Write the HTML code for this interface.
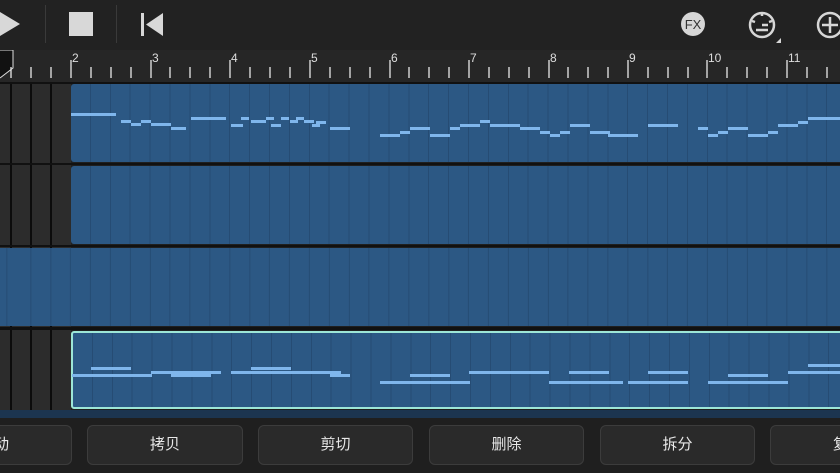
<!DOCTYPE html>
<html><head><meta charset="utf-8"><style>
*{margin:0;padding:0;box-sizing:border-box}
body{width:840px;height:473px;background:#1f1f1f;position:relative;overflow:hidden;font-family:"Liberation Sans","Noto Sans CJK SC",sans-serif}
.a{position:absolute}
.row{position:absolute;left:71px;width:780px;height:78px;background:#2c5884;border-radius:3px;
background-image:repeating-linear-gradient(90deg,transparent 0 18.9px,#264c74 18.9px 19.9px);}
.n{position:absolute;height:3px;background:#7fb6ec}
.btn{position:absolute;top:425px;height:40px;background:#2a2a2a;border:1px solid #3c3c3c;border-radius:6px;color:#e8e8e8;font-size:15px;text-align:center;line-height:38px}
.lbl{position:absolute;top:51px;color:#ddd;font-size:12px}
</style></head><body>
<div class="a" style="left:0;top:0;width:840px;height:50px;background:#222"></div>
<svg class="a" style="left:0;top:0" width="840" height="50">
<polygon points="0,12 20,24 0,36" fill="#d8d8d8"/>
<rect x="45" y="5" width="1" height="38" fill="#3a3a3a"/>
<rect x="69" y="12" width="24" height="24" fill="#d8d8d8"/>
<rect x="116" y="5" width="1" height="38" fill="#3a3a3a"/>
<rect x="141" y="13" width="3" height="23" fill="#d8d8d8"/>
<polygon points="163,13 146,24.5 163,36" fill="#d8d8d8"/>
<circle cx="693" cy="24" r="12" fill="#d6d6d6"/>
<text x="693" y="29" text-anchor="middle" font-size="13" fill="#333" font-family="Liberation Sans">FX</text>
<circle cx="762" cy="25" r="12" fill="none" stroke="#d6d6d6" stroke-width="2.5"/>
<path d="M756,30h12M762,25h6M762,13v3M752,21l3,1M772,21l-3,1" stroke="#d6d6d6" stroke-width="2.5"/>
<polygon points="776,43 781,38 781,43" fill="#d6d6d6"/>
<circle cx="830" cy="25" r="12" fill="none" stroke="#d6d6d6" stroke-width="2.5"/>
<path d="M822,25h16M830,17v16" stroke="#d6d6d6" stroke-width="2.5"/>
</svg>
<div class="a" style="left:0;top:50px;width:840px;height:32px;background:#262626"></div>
<svg class="a" style="left:0;top:50px" width="840" height="32">
<path d="M0,0h13v18l-13,10" fill="#111" stroke="#ddd" stroke-width="1"/>
<g stroke="#e8e8e8" stroke-width="1.3">
<path d="M11,17v11M31,17v11M51,17v11"/>
<path d="M71,10v18M151,10v18M230,10v18M310,10v18M390,10v18M469,10v18M549,10v18M628,10v18M707,10v18M787,10v18"/>
<path d="M91,17v11M111,17v11M131,17v11M170,17v11M190,17v11M210,17v11M250,17v11M270,17v11M290,17v11M330,17v11M350,17v11M370,17v11M409,17v11M429,17v11M449,17v11M489,17v11M509,17v11M529,17v11M568,17v11M588,17v11M608,17v11M648,17v11M668,17v11M688,17v11M727,17v11M747,17v11M767,17v11M807,17v11M827,17v11"/>
</g>
</svg>
<div class="lbl" style="left:72px">2</div><div class="lbl" style="left:152px">3</div><div class="lbl" style="left:231px">4</div><div class="lbl" style="left:311px">5</div><div class="lbl" style="left:391px">6</div><div class="lbl" style="left:470px">7</div><div class="lbl" style="left:550px">8</div><div class="lbl" style="left:629px">9</div><div class="lbl" style="left:708px">10</div><div class="lbl" style="left:788px">11</div>
<div class="a" style="left:0;top:82px;width:71px;height:336px;background:#2c2c2c;background-image:linear-gradient(90deg,transparent 10px,#0c0c0c 10px 12px,transparent 12px 30px,#0c0c0c 30px 32px,transparent 32px 50px,#0c0c0c 50px 52px,transparent 52px)"></div>
<div class="a" style="left:0;top:82px;width:840px;height:2px;background:#111"></div>
<div class="a" style="left:0;top:163px;width:840px;height:2px;background:#111"></div>
<div class="a" style="left:0;top:245px;width:840px;height:2px;background:#111"></div>
<div class="a" style="left:0;top:327px;width:840px;height:3px;background:#111"></div>
<div class="a" style="left:0;top:410px;width:840px;height:8px;background:#1c3550"></div>
<div class="a" style="left:0;top:418px;width:840px;height:55px;background:#1f1f1f"></div>
<div class="row" style="top:84px"></div>
<div class="row" style="top:166px"></div>
<div class="row" style="top:248px;left:0;width:840px;border-radius:0;background-position:11.4px 0"></div>
<div class="row" style="top:331px;height:78px;border:2px solid #9de6d6"></div>
<div class="n" style="left:71px;top:113px;width:45px"></div><div class="n" style="left:121px;top:120px;width:10px"></div><div class="n" style="left:131px;top:123px;width:10px"></div><div class="n" style="left:141px;top:120px;width:10px"></div><div class="n" style="left:151px;top:123px;width:20px"></div><div class="n" style="left:171px;top:127px;width:15px"></div><div class="n" style="left:191px;top:117px;width:35px"></div><div class="n" style="left:231px;top:124px;width:12px"></div><div class="n" style="left:241px;top:117px;width:8px"></div><div class="n" style="left:251px;top:120px;width:15px"></div><div class="n" style="left:266px;top:117px;width:8px"></div><div class="n" style="left:271px;top:124px;width:10px"></div><div class="n" style="left:281px;top:117px;width:8px"></div><div class="n" style="left:290px;top:120px;width:8px"></div><div class="n" style="left:296px;top:117px;width:8px"></div><div class="n" style="left:304px;top:120px;width:10px"></div><div class="n" style="left:312px;top:124px;width:8px"></div><div class="n" style="left:316px;top:121px;width:10px"></div><div class="n" style="left:330px;top:127px;width:20px"></div><div class="n" style="left:380px;top:134px;width:20px"></div><div class="n" style="left:400px;top:131px;width:10px"></div><div class="n" style="left:410px;top:127px;width:20px"></div><div class="n" style="left:430px;top:134px;width:20px"></div><div class="n" style="left:450px;top:127px;width:10px"></div><div class="n" style="left:460px;top:124px;width:20px"></div><div class="n" style="left:480px;top:120px;width:10px"></div><div class="n" style="left:490px;top:124px;width:30px"></div><div class="n" style="left:520px;top:127px;width:20px"></div><div class="n" style="left:540px;top:131px;width:10px"></div><div class="n" style="left:550px;top:134px;width:10px"></div><div class="n" style="left:560px;top:131px;width:10px"></div><div class="n" style="left:570px;top:124px;width:20px"></div><div class="n" style="left:590px;top:131px;width:20px"></div><div class="n" style="left:608px;top:134px;width:30px"></div><div class="n" style="left:648px;top:124px;width:30px"></div><div class="n" style="left:698px;top:127px;width:10px"></div><div class="n" style="left:708px;top:134px;width:10px"></div><div class="n" style="left:718px;top:131px;width:10px"></div><div class="n" style="left:728px;top:127px;width:20px"></div><div class="n" style="left:748px;top:134px;width:20px"></div><div class="n" style="left:768px;top:131px;width:10px"></div><div class="n" style="left:778px;top:124px;width:20px"></div><div class="n" style="left:798px;top:121px;width:10px"></div><div class="n" style="left:808px;top:117px;width:32px"></div>
<div class="n" style="left:72px;top:374px;width:80px"></div><div class="n" style="left:91px;top:367px;width:40px"></div><div class="n" style="left:151px;top:371px;width:70px"></div><div class="n" style="left:171px;top:374px;width:40px"></div><div class="n" style="left:231px;top:371px;width:110px"></div><div class="n" style="left:251px;top:367px;width:40px"></div><div class="n" style="left:330px;top:374px;width:20px"></div><div class="n" style="left:380px;top:381px;width:90px"></div><div class="n" style="left:410px;top:374px;width:40px"></div><div class="n" style="left:469px;top:371px;width:80px"></div><div class="n" style="left:549px;top:381px;width:74px"></div><div class="n" style="left:569px;top:371px;width:40px"></div><div class="n" style="left:628px;top:381px;width:60px"></div><div class="n" style="left:648px;top:371px;width:40px"></div><div class="n" style="left:708px;top:381px;width:80px"></div><div class="n" style="left:728px;top:374px;width:40px"></div><div class="n" style="left:788px;top:371px;width:52px"></div><div class="n" style="left:808px;top:364px;width:32px"></div>
<div class="btn" style="left:-90px;width:162px;text-align:right;padding-right:62px">移动</div>
<div class="btn" style="left:87px;width:156px">拷贝</div>
<div class="btn" style="left:258px;width:155px">剪切</div>
<div class="btn" style="left:429px;width:155px">删除</div>
<div class="btn" style="left:600px;width:155px">拆分</div>
<div class="btn" style="left:770px;width:155px;text-align:left;padding-left:62px">复制</div>
</body></html>
